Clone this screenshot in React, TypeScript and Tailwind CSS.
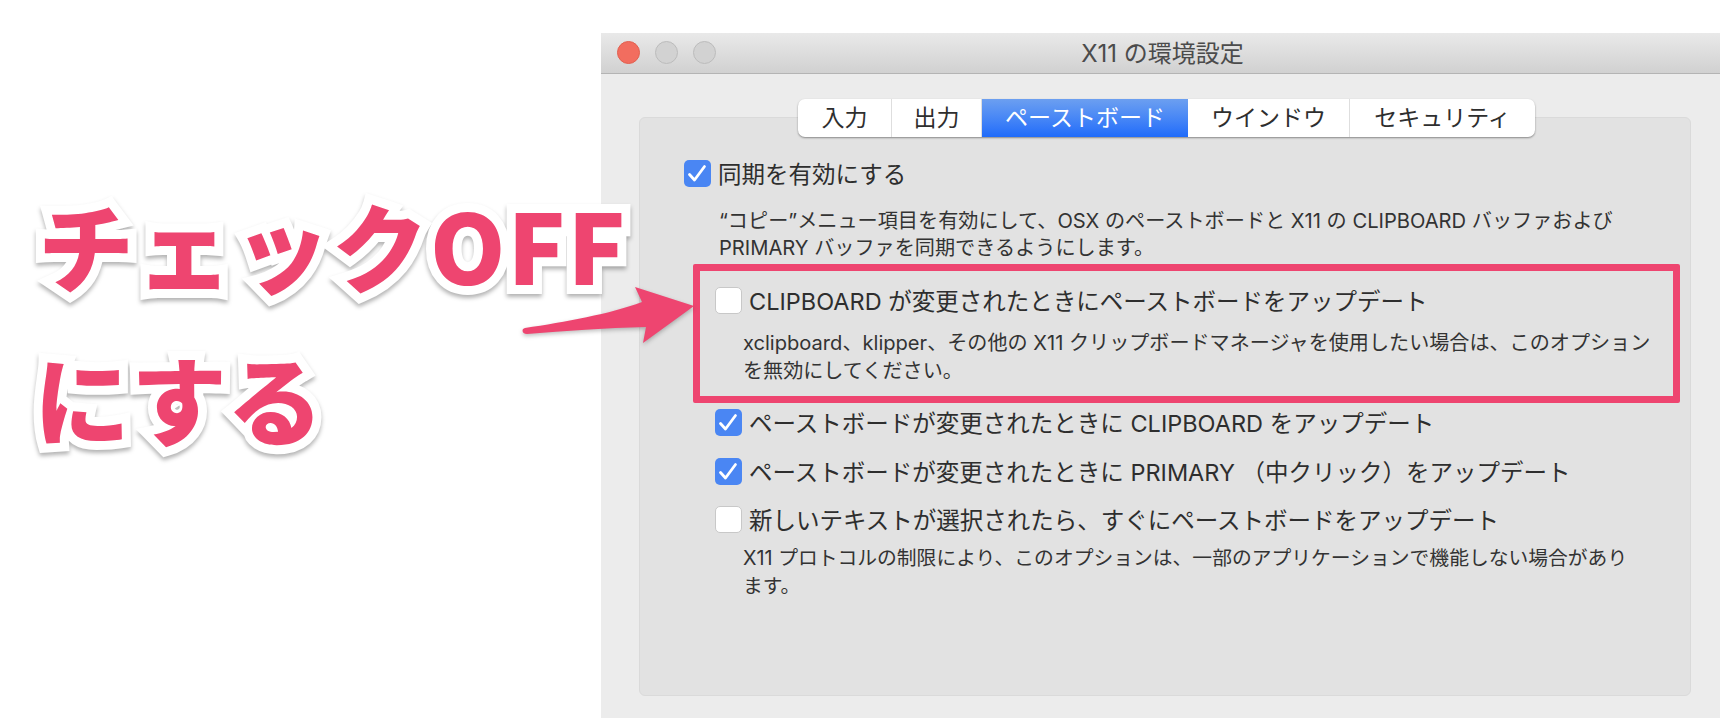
const cjk = "font-['Inter','Noto_Sans_CJK_JP',sans-serif]";

const Check = ({ on }: { on: boolean }) =>
  on ? (
    <span className="h-[27px] w-[27px] shrink-0 rounded-[5px] bg-[#4a86f3]">
      <svg width="27" height="27" viewBox="0 0 27 27" fill="none">
        <path d="M5.5 14.5l5 5.5L20.5 6.5" stroke="#fff" strokeWidth="2.8" strokeLinecap="round" strokeLinejoin="round" />
      </svg>
    </span>
  ) : (
    <span className="h-[27px] w-[27px] shrink-0 rounded-[5px] border border-[#c8c8c8] bg-white" />
  );

const Row = ({ on, children }: { on: boolean; children: React.ReactNode }) => (
  <div className="flex h-[27px] items-center gap-[7px] text-[23.5px] text-[#2e2e2e]">
    <Check on={on} />
    <span className="mt-[3px] whitespace-nowrap">{children}</span>
  </div>
);

const Tab = ({ label, w, active }: { label: string; w: string; active?: boolean }) => (
  <div
    className={`flex items-center justify-center text-[23px] ${w} ${
      active ? "bg-gradient-to-b from-[#6c9ff0] to-[#1f6bfa] text-white" : "border-r border-[#dedede] text-[#2e2e2e] last:border-r-0"
    }`}
  >
    {label}
  </div>
);

const bigText =
  "font-['Noto_Sans_CJK_JP',sans-serif] font-black text-[96px] leading-none text-[#ee4570] [-webkit-text-stroke:18px_#fff] [paint-order:stroke_fill] drop-shadow-[0_3px_2px_rgba(0,0,0,0.3)] whitespace-nowrap";

export default function App() {
  return (
    <div className={`relative flex h-[718px] w-[1720px] overflow-hidden bg-white ${cjk}`}>
      <div className="flex w-[601px] shrink-0 flex-col pl-[38px] pt-[196px]">
        <div className={`relative z-10 w-[640px] tracking-[2px] ${bigText}`}>チェックOFF</div>
        <div className={`relative z-10 ml-[-4px] mt-[57px] ${bigText}`}>にする</div>
      </div>

      <div className="relative mt-[33px] flex grow flex-col bg-[#ececec]">
        <span className="absolute left-0 top-0 h-[2px] w-[2px] bg-[#3a2a2a]" />
        <div className="relative flex h-[41px] shrink-0 items-center justify-center border-b border-[#b4b4b4] bg-gradient-to-b from-[#e9e9e9] to-[#d1d1d1]">
          <div className="absolute left-[16px] top-[8px] flex gap-[15px]">
            <span className="h-[23px] w-[23px] rounded-full border border-[#e2604f] bg-[#f26d5f]" />
            <span className="h-[23px] w-[23px] rounded-full border border-[#bcbcbc] bg-[#d2d2d2]" />
            <span className="h-[23px] w-[23px] rounded-full border border-[#bcbcbc] bg-[#d2d2d2]" />
          </div>
          <span className="ml-[4px] mt-[2px] text-[24px] text-[#4b4b4b]">X11 の環境設定</span>
        </div>

        <div className="relative ml-[38px] mr-[29px] mt-[43px] h-[579px] rounded-[6px] border border-[#dadada] bg-[#e2e2e2]">
          <div className="absolute left-[158px] top-[-19px] flex h-[38px] w-[737px] overflow-hidden rounded-[7px] bg-white shadow-[0_1px_2px_rgba(0,0,0,0.4)]">
            <Tab label="入力" w="w-[94px]" />
            <Tab label="出力" w="w-[90px]" />
            <Tab label="ペーストボード" w="w-[206px]" active />
            <Tab label="ウインドウ" w="w-[162px]" />
            <Tab label="セキュリティ" w="w-[185px]" />
          </div>

          <div className="flex flex-col pl-[44px] pt-[42px]">
            <Row on>同期を有効にする</Row>
            <p className="ml-[35px] mt-[20px] text-[20.15px] leading-[27px] text-[#333] whitespace-nowrap">
              “コピー”メニュー項目を有効にして、OSX のペーストボードと X11 の CLIPBOARD バッファおよび
              <br />
              PRIMARY バッファを同期できるようにします。
            </p>
            <div className="ml-[9px] mt-[3px] h-[139px] w-[987px] rounded-[2px] border-[7px] border-[#ee4570] pl-[15px] pt-[16px]">
              <Row on={false}>CLIPBOARD が変更されたときにペーストボードをアップデート</Row>
              <p className="ml-[28px] mt-[15px] text-[20.1px] leading-[28px] text-[#333] whitespace-nowrap">
                xclipboard、klipper、その他の X11 クリップボードマネージャを使用したい場合は、このオプション
                <br />
                を無効にしてください。
              </p>
            </div>
            <div className="ml-[31px] mt-[6px] flex flex-col gap-[21.5px]">
              <Row on>ペーストボードが変更されたときに CLIPBOARD をアップデート</Row>
              <Row on>ペーストボードが変更されたときに PRIMARY （中クリック）をアップデート</Row>
              <Row on={false}>新しいテキストが選択されたら、すぐにペーストボードをアップデート</Row>
            </div>
            <p className="ml-[59px] mt-[11px] text-[19.8px] leading-[28px] text-[#333] whitespace-nowrap">
              X11 プロトコルの制限により、このオプションは、一部のアプリケーションで機能しない場合があり
              <br />
              ます。
            </p>
          </div>
        </div>
      </div>

      <svg className="absolute left-[516px] top-[282px] z-20 drop-shadow-[0_2px_2px_rgba(0,0,0,0.25)]" width="182" height="66" viewBox="516 282 182 66">
        <path
          d="M525 328C565 322 610 314 642 302L635 287L694 306L643 343L646 327C605 328 565 331 527 334C522 334 521 329 525 328Z"
          fill="#ee4570"
        />
      </svg>
    </div>
  );
}
